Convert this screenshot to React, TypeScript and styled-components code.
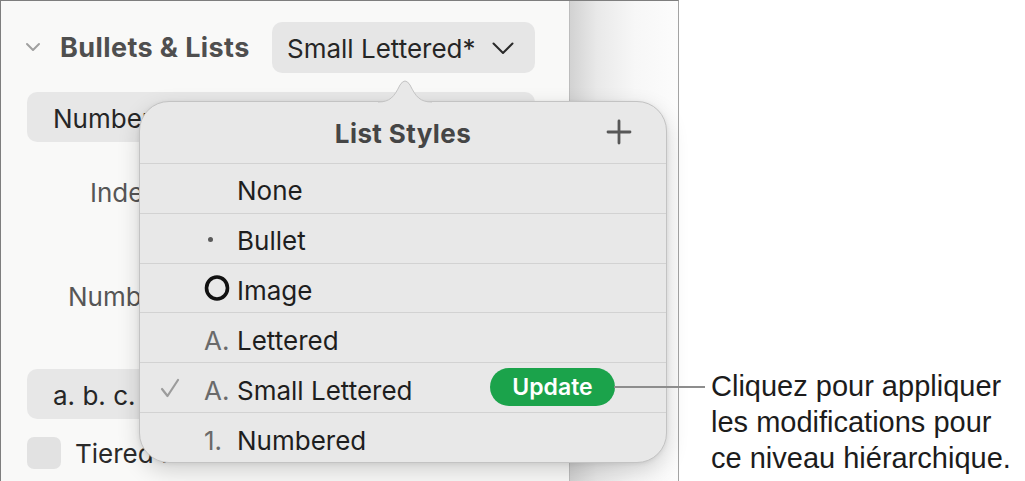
import React from "react";
import styled, { createGlobalStyle } from "styled-components";

const GlobalStyle = createGlobalStyle`
  html, body { margin: 0; padding: 0; background: #ffffff; }
  body {
    width: 1025px;
    height: 481px;
    overflow: hidden;
    font-family: Inter, "Liberation Sans", sans-serif;
    -webkit-font-smoothing: antialiased;
  }
  * { box-sizing: border-box; }
`;

const Page = styled.div`
  position: relative;
  display: flex;
  width: 1025px;
  height: 481px;
  overflow: hidden;
`;

const Frame = styled.div`
  display: flex;
  flex-shrink: 0;
  width: 679px;
  height: 500px;
  border: 1px solid #7e7e7e;
  border-right-color: #a3a3a3;
  border-bottom: none;
`;

const Sidebar = styled.div`
  display: flex;
  flex-direction: column;
  width: 568px;
  padding: 21px 34px 0 26px;
  background: #f9f9f8;
  color: #2a2a2a;
`;

const Divider = styled.div`
  width: 1px;
  background: #bdbdbd;
`;

const DocArea = styled.div`
  flex: 1;
  background: linear-gradient(90deg, #d2d2d2 0%, #e9e9e9 25%, #f7f7f7 60%, #fcfcfc 100%);
`;

const HeaderRow = styled.div`
  display: flex;
  align-items: center;
  height: 51px;
`;

const Disclosure = styled.svg`
  width: 16px;
  height: 10px;
  margin-left: -2px;
  margin-right: 19px;
  margin-top: -1px;
`;

const SectionTitle = styled.span`
  font-size: 27px;
  font-weight: 700;
  color: #4f4f4f;
  letter-spacing: 0.4px;
`;

const Dropdown = styled.div`
  display: flex;
  align-items: center;
  margin-left: auto;
  width: 263px;
  height: 51px;
  padding: 2px 0 0 15px;
  border-radius: 10px;
  background: #e6e6e6;
  font-size: 26px;
  color: #262626;
  white-space: nowrap;
`;

const DropChevron = styled.svg`
  width: 22px;
  height: 13px;
  margin-left: 16px;
  flex-shrink: 0;
`;

const FieldBox = styled.div<{ $top: number }>`
  display: flex;
  align-items: center;
  height: 50px;
  margin-top: ${(p) => p.$top}px;
  padding: 2px 0 0 26px;
  border-radius: 10px;
  background: #e7e7e7;
  font-size: 26px;
  color: #262626;
`;

const FieldLabel = styled.div<{ $top: number; $indent: number }>`
  display: flex;
  align-items: center;
  height: 40px;
  margin-top: ${(p) => p.$top}px;
  padding-left: ${(p) => p.$indent}px;
  font-size: 26px;
  color: #565656;
`;

const CheckRow = styled.div`
  display: flex;
  align-items: center;
  gap: 14px;
  height: 32px;
  margin-top: 18px;
  font-size: 26px;
  color: #2a2a2a;
`;

const CheckBox = styled.div`
  width: 34px;
  height: 32px;
  border-radius: 7px;
  background: #e2e2e2;
  flex-shrink: 0;
`;

const Popover = styled.div`
  position: absolute;
  left: 139px;
  top: 101px;
  width: 528px;
  height: 362px;
  border: 1px solid #c3c3c3;
  border-radius: 30px;
  background: #e8e8e8;
  box-shadow: 0 8px 22px rgba(0, 0, 0, 0.16), 0 1px 4px rgba(0, 0, 0, 0.08);
  display: flex;
  flex-direction: column;
`;

const Arrow = styled.svg`
  position: absolute;
  left: 238px;
  top: -24px;
  width: 54px;
  height: 26px;
  overflow: visible;
`;

const PopHeader = styled.div`
  display: grid;
  grid-template-columns: 1fr auto 1fr;
  align-items: center;
  height: 62px;
  border-bottom: 1px solid #d2d2d2;
`;

const PopTitle = styled.span`
  grid-column: 2;
  font-size: 26px;
  font-weight: 700;
  color: #454545;
  letter-spacing: 0.4px;
  padding-top: 2px;
`;

const PlusIcon = styled.svg`
  grid-column: 3;
  justify-self: end;
  width: 26px;
  height: 26px;
  margin-right: 34px;
`;

const StyleRow = styled.div<{ $last?: boolean }>`
  display: grid;
  grid-template-columns: 64px 33px 1fr auto;
  align-items: center;
  height: ${(p) => (p.$last ? 49 : 50)}px;
  border-bottom: ${(p) => (p.$last ? "none" : "1px solid #d2d2d2")};
  font-size: 26px;
  color: #1e1e1e;
`;

const CheckCell = styled.div`
  display: flex;
  align-items: center;
  padding-left: 20px;
`;

const MarkerCell = styled.div`
  display: flex;
  align-items: center;
  color: #6a6a6a;
  padding-top: 5px;
`;

const RowLabel = styled.span`
  padding-top: 5px;
  white-space: nowrap;
`;

const Dot = styled.span`
  width: 5px;
  height: 5px;
  margin-left: 4px;
  margin-top: -3px;
  border-radius: 50%;
  background: #5a5a5a;
`;

const UpdateButton = styled.div`
  display: flex;
  align-items: center;
  justify-content: center;
  width: 125px;
  height: 38px;
  margin-right: 51px;
  margin-top: -2px;
  border-radius: 19px;
  background: #1ba34b;
  color: #ffffff;
  font-size: 23px;
  font-weight: 600;
`;

const Connector = styled.div`
  position: absolute;
  left: 614px;
  top: 386px;
  width: 91px;
  height: 2px;
  background: #8d8d8d;
`;

const Callout = styled.div`
  margin-left: 32px;
  padding-top: 368px;
  font-family: "Liberation Sans", Arial, sans-serif;
  font-size: 29px;
  line-height: 36px;
  color: #1c1c1c;
  white-space: nowrap;
`;

type Marker = "none" | "dot" | "ring" | "A." | "1.";

const rows: { label: string; marker: Marker; checked?: boolean; update?: boolean }[] = [
  { label: "None", marker: "none" },
  { label: "Bullet", marker: "dot" },
  { label: "Image", marker: "ring" },
  { label: "Lettered", marker: "A." },
  { label: "Small Lettered", marker: "A.", checked: true, update: true },
  { label: "Numbered", marker: "1." },
];

function renderMarker(m: Marker) {
  if (m === "dot") return <Dot />;
  if (m === "ring")
    return (
      <svg width="28" height="28" viewBox="0 0 28 28" style={{ marginTop: -4 }}>
        <ellipse cx="13" cy="14" rx="10.5" ry="11" fill="none" stroke="#111" strokeWidth="3.6" />
      </svg>
    );
  if (m === "none") return null;
  return <span>{m}</span>;
}

export default function App() {
  return (
    <>
      <GlobalStyle />
      <Page>
        <Frame>
          <Sidebar>
            <HeaderRow>
              <Disclosure viewBox="0 0 16 10">
                <polyline points="2,2 8,8 14,2" fill="none" stroke="#a0a0a0" strokeWidth="2" strokeLinecap="round" strokeLinejoin="round" />
              </Disclosure>
              <SectionTitle>Bullets &amp; Lists</SectionTitle>
              <Dropdown>
                Small Lettered*
                <DropChevron viewBox="0 0 22 13">
                  <polyline points="1.5,1.5 11,11 20.5,1.5" fill="none" stroke="#2a2a2a" strokeWidth="2" strokeLinecap="round" strokeLinejoin="round" />
                </DropChevron>
              </Dropdown>
            </HeaderRow>
            <FieldBox $top={19}>Numbers</FieldBox>
            <FieldLabel $top={30} $indent={63}>Indent</FieldLabel>
            <FieldLabel $top={64} $indent={41}>Number</FieldLabel>
            <FieldBox $top={53}>a. b. c.</FieldBox>
            <CheckRow>
              <CheckBox />
              Tiered Numbers
            </CheckRow>
          </Sidebar>
          <Divider />
          <DocArea />
        </Frame>
        <Callout>
          Cliquez pour appliquer
          <br />
          les modifications pour
          <br />
          ce niveau hiérarchique.
        </Callout>
        <Popover>
          <Arrow viewBox="0 0 54 26">
            <path d="M0 26 L0 24 C12 24 16 19 22 7 Q27 -1 32 7 C38 19 42 24 54 24 L54 26 Z" fill="#e8e8e8" />
            <path d="M0 24 C12 24 16 19 22 7 Q27 -1 32 7 C38 19 42 24 54 24" fill="none" stroke="#c3c3c3" strokeWidth="1" />
          </Arrow>
          <PopHeader>
            <PopTitle>List Styles</PopTitle>
            <PlusIcon viewBox="0 0 26 26">
              <path d="M13 2 V24 M2 13 H24" stroke="#575757" strokeWidth="2.8" strokeLinecap="round" />
            </PlusIcon>
          </PopHeader>
          {rows.map((r, i) => (
            <StyleRow key={r.label} $last={i === rows.length - 1}>
              <CheckCell>
                {r.checked && (
                  <svg width="20" height="20" viewBox="0 0 20 20">
                    <polyline points="2,11 7.5,18 18,2" fill="none" stroke="#9c9c9c" strokeWidth="2.2" strokeLinecap="round" strokeLinejoin="round" />
                  </svg>
                )}
              </CheckCell>
              <MarkerCell>{renderMarker(r.marker)}</MarkerCell>
              <RowLabel>{r.label}</RowLabel>
              {r.update ? <UpdateButton>Update</UpdateButton> : <span />}
            </StyleRow>
          ))}
        </Popover>
        <Connector />
      </Page>
    </>
  );
}
